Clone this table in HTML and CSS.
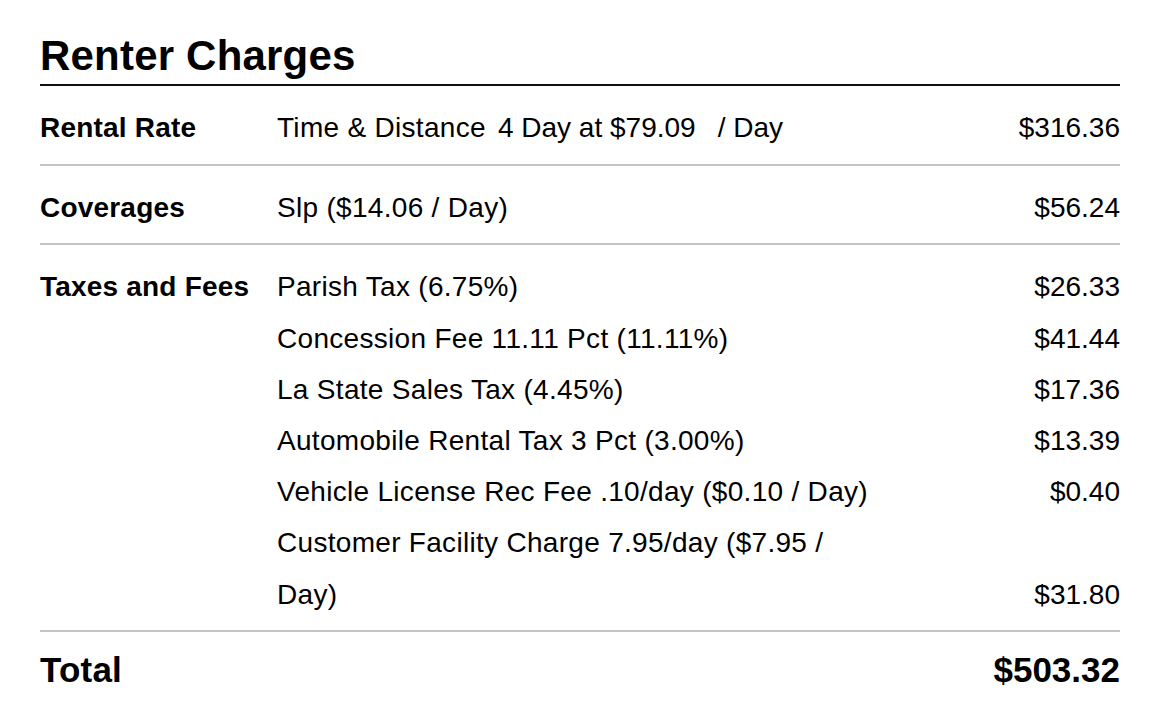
FILE: index.html
```html
<!DOCTYPE html>
<html lang="en">
<head>
<meta charset="utf-8">
<title>Renter Charges</title>
<link rel="stylesheet" href="styles.css">
</head>
<body>
<main class="charges">
  <h1 class="title">Renter Charges</h1>

  <section class="group">
    <div class="label">Rental Rate</div>
    <div class="items">
      <div class="item">
        <div class="desc">Time &amp; Distance <span class="qty">4 Day at $79.09</span> <span class="unit">/ Day</span></div>
        <div class="amt">$316.36</div>
      </div>
    </div>
  </section>

  <section class="group">
    <div class="label">Coverages</div>
    <div class="items">
      <div class="item">
        <div class="desc">Slp ($14.06 / Day)</div>
        <div class="amt">$56.24</div>
      </div>
    </div>
  </section>

  <section class="group">
    <div class="label">Taxes and Fees</div>
    <div class="items">
      <div class="item">
        <div class="desc">Parish Tax (6.75%)</div>
        <div class="amt">$26.33</div>
      </div>
      <div class="item">
        <div class="desc">Concession Fee 11.11 Pct (11.11%)</div>
        <div class="amt">$41.44</div>
      </div>
      <div class="item">
        <div class="desc">La State Sales Tax (4.45%)</div>
        <div class="amt">$17.36</div>
      </div>
      <div class="item">
        <div class="desc">Automobile Rental Tax 3 Pct (3.00%)</div>
        <div class="amt">$13.39</div>
      </div>
      <div class="item">
        <div class="desc">Vehicle License Rec Fee .10/day ($0.10 / Day)</div>
        <div class="amt">$0.40</div>
      </div>
      <div class="item">
        <div class="desc">Customer Facility Charge 7.95/day ($7.95 / Day)</div>
        <div class="amt">$31.80</div>
      </div>
    </div>
  </section>

  <div class="total">
    <div class="total-label">Total</div>
    <div class="total-amt">$503.32</div>
  </div>
</main>
</body>
</html>
```

FILE: styles.css
```css
html, body {
  margin: 0;
  padding: 0;
  background: #ffffff;
}

body {
  font-family: "Liberation Sans", Arial, Helvetica, sans-serif;
  color: #000000;
}

.charges {
  width: 1080px;
  margin-left: 40px;
}

.title {
  margin: 0;
  padding-top: 32px;
  padding-bottom: 4px;
  font-size: 42px;
  line-height: 48px;
  font-weight: 700;
  letter-spacing: 0.2px;
  border-bottom: 2px solid #111111;
}

.group {
  display: grid;
  grid-template-columns: 237px 1fr;
  padding-top: 16px;
  padding-bottom: 10.5px;
  border-bottom: 2px solid #c4c4c4;
  font-size: 28px;
  line-height: 51.2px;
}

.label {
  font-weight: 700;
  letter-spacing: 0.2px;
}

.items {
  display: flex;
  flex-direction: column;
}

.item {
  display: grid;
  grid-template-columns: 600px 1fr;
}

.desc {
  letter-spacing: 0.3px;
}

.amt {
  text-align: right;
  align-self: end;
}

.qty {
  margin-left: 4px;
  letter-spacing: 0;
}

.unit {
  margin-left: 14px;
  letter-spacing: 0;
}

.total {
  display: flex;
  justify-content: space-between;
  align-items: baseline;
  padding-top: 16px;
  font-size: 35px;
  line-height: 44px;
  font-weight: 700;
}

.total-label {
  letter-spacing: 0.2px;
}
```
